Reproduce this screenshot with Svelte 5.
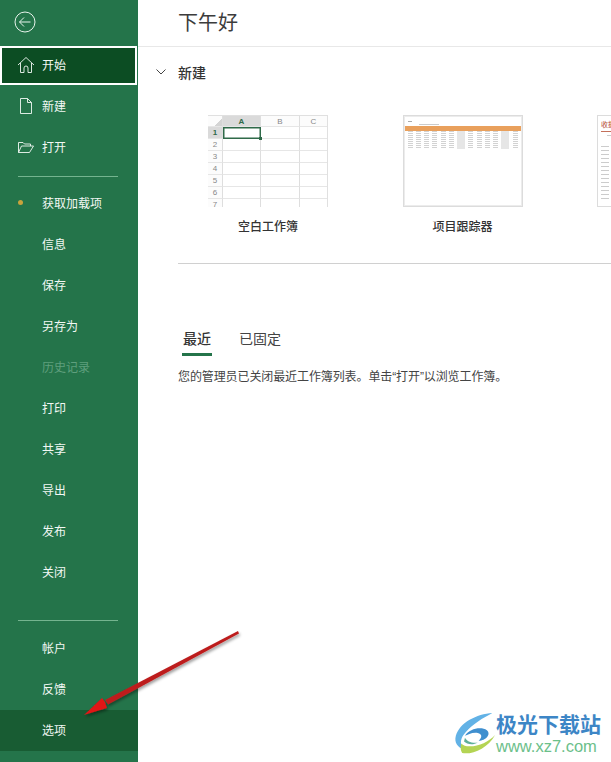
<script>
  const top = [
    { label: "开始", icon: "home", active: true },
    { label: "新建", icon: "file" },
    { label: "打开", icon: "folder" },
  ];
  const middle = [
    { label: "获取加载项", dot: true },
    { label: "信息" },
    { label: "保存" },
    { label: "另存为" },
    { label: "历史记录", disabled: true },
    { label: "打印" },
    { label: "共享" },
    { label: "导出" },
    { label: "发布" },
    { label: "关闭" },
  ];
  const bottom = [{ label: "帐户" }, { label: "反馈" }, { label: "选项", hover: true }];

  const sheetRows = [1, 2, 3, 4, 5, 6, 7];
  const trackerRows = Array.from({ length: 9 }, (_, i) => i);
  const trackerCols = Array.from({ length: 13 }, (_, i) => i);
  const listRows = Array.from({ length: 14 }, (_, i) => i);
</script>

{#snippet row(item)}
  <div class="item" class:active={item.active} class:hover={item.hover} class:disabled={item.disabled}>
    <span class="ico">
      {#if item.icon === "home"}
        <svg width="18" height="18" viewBox="0 0 18 18" fill="none" stroke="currentColor" stroke-width="0.9">
          <path d="M1 9 9 1.5 17 9M3.5 7V16.5H7V12A2 2 0 0 1 11 12V16.5H14.5V7" />
        </svg>
      {:else if item.icon === "file"}
        <svg width="18" height="18" viewBox="0 0 18 18" fill="none" stroke="currentColor" stroke-width="0.9">
          <path d="M3.5 1.5H10.5L14.5 5.5V16.5H3.5ZM10.5 1.5V5.5H14.5" />
        </svg>
      {:else if item.icon === "folder"}
        <svg width="18" height="18" viewBox="0 0 18 18" fill="none" stroke="currentColor" stroke-width="0.9">
          <path d="M1.5 14.5V4.5H6L7.5 6H13.5V8M1.5 14.5H12.5L16.5 8H4.5Z" />
        </svg>
      {:else if item.dot}
        <span class="dot"></span>
      {/if}
    </span>
    <span>{item.label}</span>
  </div>
{/snippet}

<div class="app">
  <aside class="sidebar">
    <div class="back">
      <svg width="22" height="22" viewBox="0 0 22 22" fill="none" stroke="currentColor" stroke-width="1">
        <circle cx="11" cy="11" r="10" />
        <path d="M16.5 11H5.5M10 6.5 5.5 11 10 15.5" />
      </svg>
    </div>
    {#each top as item}{@render row(item)}{/each}
    <div class="divider first"></div>
    {#each middle as item}{@render row(item)}{/each}
    <div class="divider last"></div>
    {#each bottom as item}{@render row(item)}{/each}
  </aside>

  <main class="main">
    <header class="greeting">下午好</header>

    <section class="new">
      <div class="section-title">
        <svg width="10" height="6" viewBox="0 0 10 6" fill="none" stroke="#444" stroke-width="1">
          <path d="M0.5 0.5 5 5 9.5 0.5" />
        </svg>
        <span>新建</span>
      </div>

      <div class="templates">
        <div class="template">
          <div class="thumb sheet">
            <div class="cell corner"></div>
            <div class="cell colhead sel">A</div>
            <div class="cell colhead">B</div>
            <div class="cell colhead">C</div>
            {#each sheetRows as n}
              <div class="cell rowhead" class:sel={n === 1}>{n}</div>
              <div class="cell" class:picked={n === 1}></div>
              <div class="cell"></div>
              <div class="cell"></div>
            {/each}
          </div>
          <div class="template-name">空白工作簿</div>
        </div>

        <div class="template">
          <div class="thumb tracker">
            <div class="tracker-title"></div>
            <div class="tracker-sub"></div>
            <div class="band"></div>
            {#each trackerRows as r}
              <div class="tracker-row">
                {#each trackerCols as c}
                  <span class="tick" class:shade={c === 6 || c === 11}></span>
                {/each}
              </div>
            {/each}
          </div>
          <div class="template-name">项目跟踪器</div>
        </div>

        <div class="template">
          <div class="thumb list">
            <div class="list-title">收据</div>
            <div class="list-rule"></div>
            <div class="list-sub"></div>
            {#each listRows as r}
              <div class="list-row"></div>
            {/each}
          </div>
        </div>
      </div>

      <div class="rule"></div>
    </section>

    <section class="recent">
      <div class="tabs">
        <div class="tab current">最近</div>
        <div class="tab">已固定</div>
      </div>
      <p class="notice">您的管理员已关闭最近工作簿列表。单击“打开”以浏览工作簿。</p>
    </section>
  </main>

  <svg class="arrow" width="611" height="762" viewBox="0 0 611 762">
    <defs>
      <filter id="shade" x="-20%" y="-20%" width="140%" height="140%">
        <feDropShadow dx="1" dy="2" stdDeviation="1.4" flood-color="#000" flood-opacity="0.4" />
      </filter>
    </defs>
    <g filter="url(#shade)">
      <path d="M238 631 239 633.5 108 704.5 105 700Z" fill="#bd1f1f" />
      <path d="M84 715 102 698 105 702 107 708Z" fill="#e01414" />
    </g>
  </svg>

  <div class="watermark">
    <svg width="42" height="42" viewBox="0 0 46 44" preserveAspectRatio="none">
      <path d="M42 1C25 2 6 11 2 25C0 32 4 37 10 39C6 33 7 27 13 21C20 13 32 6 42 1Z" fill="#62b2e6" />
      <path d="M12 25C17 17 30 15 36 19C41 23 35 30 27 30C31 27 31 23 26 22C20 21 15 24 12 25Z" fill="#3f8fcf" />
      <path d="M9 43C20 45 37 38 45 24C38 31 28 36 17 36C13 36 10 35 8 33C7 37 7 40 9 43Z" fill="#b4d454" />
      <path d="M12 27C14 31 20 33 26 32C21 35 14 34 11 31Z" fill="#5fb09a" />
    </svg>
    <div class="wm-text">
      <div class="wm-name">极光下载站</div>
      <div class="wm-url">www.xz7.com</div>
    </div>
  </div>
</div>

<style>
  :global(body) {
    margin: 0;
    background: #fff;
  }
  .app {
    position: relative;
    display: flex;
    width: 611px;
    height: 762px;
    overflow: hidden;
    font-family: "Noto Sans CJK SC", "Liberation Sans", sans-serif;
    color: #333;
  }

  .sidebar {
    flex: 0 0 138px;
    display: flex;
    flex-direction: column;
    background: #24744a;
    color: #f2f8f4;
    font-size: 12px;
  }
  .back {
    height: 45px;
    box-sizing: border-box;
    padding: 11px 0 0 14px;
    color: #e8f3ec;
  }
  .back svg {
    display: block;
  }
  .item {
    display: flex;
    align-items: center;
    flex: 0 0 41px;
    box-sizing: border-box;
    height: 41px;
    padding-bottom: 2px;
  }
  .item.active {
    flex-basis: 39px;
    height: 39px;
    margin: 1px 1px 1px 0;
    background: #0c4d23;
    box-shadow: inset 0 0 0 2px #fff;
  }
  .item.hover {
    background: #185c33;
  }
  .item.disabled {
    color: #5f9f7d;
  }
  .ico {
    flex: 0 0 42px;
    display: flex;
    align-items: center;
    justify-content: center;
    padding-left: 9px;
    box-sizing: border-box;
    height: 18px;
  }
  .dot {
    width: 5px;
    height: 5px;
    margin-right: 10px;
    border-radius: 50%;
    background: #c9a33c;
  }
  .divider {
    height: 1px;
    margin-left: 18px;
    margin-right: 20px;
    background: #74b48f;
  }
  .divider.first {
    margin-top: 8px;
    margin-bottom: 6px;
  }
  .divider.last {
    margin-top: 27px;
    margin-bottom: 7px;
  }

  .main {
    flex: 1;
    min-width: 0;
    overflow: hidden;
  }
  .greeting {
    height: 47px;
    box-sizing: border-box;
    padding: 7px 0 0 40px;
    border-bottom: 1px solid #e8e8e8;
    font-size: 20px;
    line-height: 30px;
    color: #3c3c3c;
  }
  .section-title {
    display: flex;
    align-items: center;
    gap: 12px;
    height: 24px;
    margin-top: 13px;
    padding-left: 18px;
    font-size: 14px;
    font-weight: 500;
    color: #333;
  }
  .templates {
    display: flex;
    gap: 74.5px;
    margin-top: 31px;
    padding-left: 70px;
  }
  .template {
    flex: 0 0 120px;
  }
  .thumb {
    box-sizing: border-box;
    width: 120px;
    height: 92px;
    overflow: hidden;
    background: #fff;
  }
  .template-name {
    margin-top: 10px;
    text-align: center;
    font-size: 12px;
    line-height: 18px;
    font-weight: 500;
    color: #333;
  }

  .sheet {
    display: grid;
    grid-template-columns: 15px 38px 39px 28px;
    grid-template-rows: 11px;
    grid-auto-rows: 12px;
    border-top: 1px solid #e0e0e0;
    border-right: 1px solid #e0e0e0;
    font-family: "Liberation Sans", sans-serif;
    font-size: 8px;
    color: #888;
  }
  .cell {
    box-sizing: border-box;
    display: flex;
    align-items: center;
    justify-content: center;
    border-right: 1px solid #dedede;
    border-bottom: 1px solid #e6e6e6;
  }
  .colhead,
  .rowhead {
    background: #fcfcfc;
  }
  .corner {
    background: linear-gradient(135deg, #fcfcfc 68%, #d4d4d4 70%);
  }
  .cell.sel {
    background: #dadada;
    color: #2f6a49;
    font-weight: 700;
  }
  .cell.picked {
    position: relative;
    border: 1px solid #2f6a49;
    box-shadow: inset 0 0 0 0.5px #2f6a49;
  }
  .cell.picked::after {
    content: "";
    position: absolute;
    right: -2px;
    bottom: -2px;
    width: 3px;
    height: 3px;
    background: #2f6a49;
  }

  .tracker {
    padding: 5px 1px 0;
    border: 1px solid #dcdcdc;
    box-shadow: inset 0 0 0 1px #ececec;
  }
  .tracker-title {
    width: 4px;
    height: 1px;
    margin-left: 3px;
    background: #aaa;
  }
  .tracker-sub {
    width: 20px;
    height: 1px;
    margin: 2px 0 0 14px;
    background: #ccc;
  }
  .band {
    height: 5px;
    margin-top: 1px;
    background: #e9a05c;
  }
  .tracker-row {
    display: flex;
    justify-content: space-between;
    height: 2px;
    padding: 0 3px;
    border-bottom: 0;
  }
  .tick {
    width: 5px;
    height: 1px;
    background: #d2d2d2;
  }
  .tick.shade {
    background: #e6e6e6;
    height: 2px;
    width: 8px;
  }

  .list {
    padding: 4px 3px 0;
    border: 1px solid #dcdcdc;
  }
  .list-title {
    font-size: 7px;
    line-height: 8px;
    color: #b3492f;
  }
  .list-rule {
    height: 1px;
    margin-top: 3px;
    background: #c4705a;
  }
  .list-sub {
    width: 8px;
    height: 1px;
    margin: 3px 0 10px 6px;
    background: #ccc;
  }
  .list-row {
    width: 8px;
    height: 1px;
    margin-bottom: 3px;
    background: #ccc;
  }

  .rule {
    height: 1px;
    margin: 28px 0 0 40px;
    background: #d0d0d0;
  }

  .recent {
    padding: 59px 0 0 40px;
  }
  .tabs {
    display: flex;
    gap: 28px;
    padding-left: 5px;
  }
  .tab {
    height: 30px;
    font-size: 14px;
    line-height: 30px;
    color: #444;
  }
  .tab.current {
    position: relative;
    font-weight: 500;
    color: #333;
  }
  .tab.current::after {
    content: "";
    position: absolute;
    left: -1px;
    right: -1px;
    bottom: -3px;
    height: 3px;
    background: #24744a;
  }
  .notice {
    margin: 15px 0 0;
    font-family: "Liberation Sans", "Noto Sans CJK SC", sans-serif;
    font-size: 12px;
    line-height: 18px;
    letter-spacing: -0.1px;
    color: #444;
  }

  .arrow {
    position: absolute;
    left: 0;
    top: 0;
    pointer-events: none;
  }
  .watermark {
    position: absolute;
    left: 454px;
    top: 712px;
    display: flex;
  }
  .wm-name {
    font-size: 21px;
    line-height: 22px;
    font-weight: 700;
    color: #3d86c6;
    white-space: nowrap;
  }
  .wm-url {
    margin-top: 4px;
    font-family: "Liberation Sans", sans-serif;
    font-size: 16.5px;
    line-height: 16px;
    color: #6cc08a;
    white-space: nowrap;
  }
</style>
